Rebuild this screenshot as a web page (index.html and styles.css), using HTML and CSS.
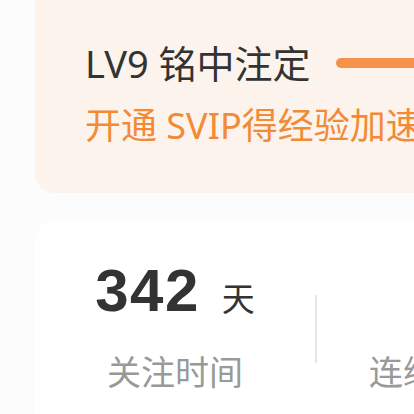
FILE: index.html
```html
<!DOCTYPE html>
<html lang="zh-CN">
<head>
<meta charset="utf-8">
<title>等级</title>
<link rel="stylesheet" href="styles.css">
</head>
<body>
<section class="level-card">
  <div class="level-row">
    <span class="level-name">LV9 铭中注定</span>
    <span class="level-bar"></span>
  </div>
  <div class="level-tip">开通 SVIP得经验加速</div>
</section>
<section class="stats-card">
  <div class="stats-row">
    <div class="stat">
      <div class="stat-num"><span class="num">342</span><span class="unit">天</span></div>
      <div class="stat-label">关注时间</div>
    </div>
    <div class="divider"></div>
    <div class="stat stat-second">
      <div class="stat-num"></div>
      <div class="stat-label">连续访问</div>
    </div>
  </div>
</section>
</body>
</html>
```
FILE: styles.css
```css
html, body {
  margin: 0;
  padding: 0;
  width: 414px;
  height: 414px;
  overflow: hidden;
}
body {
  background: #fcfcfc;
  font-family: "Noto Sans", "Noto Sans CJK SC", sans-serif;
}
.level-card {
  margin: -20px -40px 0 35px;
  height: 213px;
  box-sizing: border-box;
  padding: 61px 0 0 50px;
  background: #fcf3ed;
  border-radius: 20px;
  overflow: hidden;
}
.level-row {
  display: flex;
  align-items: center;
  height: 44px;
  white-space: nowrap;
}
.level-name {
  font-size: 38px;
  line-height: 44px;
  color: #333;
}
.level-bar {
  margin-left: 25px;
  width: 140px;
  height: 10px;
  border-radius: 5px;
  background: #f6914a;
  flex: none;
}
.level-tip {
  margin-top: 19px;
  font-size: 36px;
  line-height: 44px;
  color: #f28a36;
  white-space: nowrap;
}
.stats-card {
  margin: 28px -40px 0 35px;
  padding-top: 40px;
  height: 260px;
  background: #fff;
  border-radius: 20px;
  overflow: hidden;
}
.stats-row {
  display: flex;
  align-items: flex-start;
}
.stat {
  flex: none;
  width: 280px;
  display: flex;
  flex-direction: column;
  align-items: center;
}
.stat-num {
  height: 60px;
  line-height: 60px;
  white-space: nowrap;
  color: #333;
}
.num {
  font-family: "Liberation Sans", sans-serif;
  font-weight: bold;
  font-size: 60px;
  letter-spacing: 1.5px;
}
.unit {
  margin-left: 22px;
  font-family: "Noto Sans CJK SC", sans-serif;
  font-size: 33px;
  line-height: 1;
}
.stat-label {
  margin-top: 33px;
  font-family: "Noto Sans CJK SC", sans-serif;
  font-size: 34px;
  line-height: 34px;
  color: #999;
  white-space: nowrap;
}
.divider {
  margin-top: 34px;
  width: 2px;
  height: 68px;
  background: #e6e6e6;
  flex: none;
}
.stat-second {
  align-items: flex-start;
  padding-left: 52px;
}
```
